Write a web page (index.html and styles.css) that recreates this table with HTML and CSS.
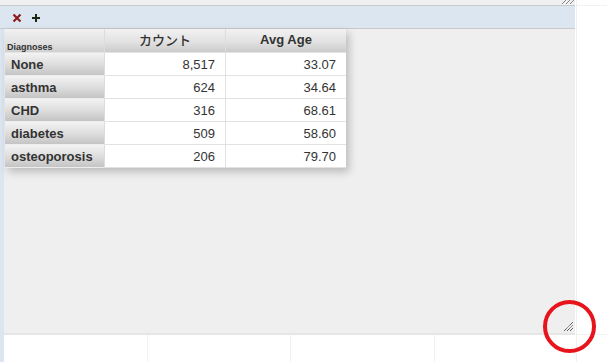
FILE: index.html
```html
<!DOCTYPE html>
<html>
<head>
<meta charset="utf-8">
<link rel="stylesheet" href="styles.css">
</head>
<body>
<div class="page">
  <div class="win">
    <div class="topstrip">
      <svg class="topgrip" width="12" height="4" viewBox="0 0 12 4">
        <path d="M0.5 3.5 L3.5 0.5 M4.5 3.5 L7.5 0.5 M8.5 3.5 L11.5 0.5" stroke="#222" stroke-width="1" stroke-dasharray="1 0.6" fill="none"/>
      </svg>
    </div>
    <div class="toolbar">
      <svg class="ico" width="10" height="10" viewBox="0 0 10 10">
        <path d="M1.5 1.5 L8.5 8.5 M8.5 1.5 L1.5 8.5" stroke="#8b1d1d" stroke-width="2.2" fill="none"/>
      </svg>
      <svg class="ico" width="10" height="10" viewBox="0 0 10 10">
        <path d="M5 1 V9 M1 5 H9" stroke="#1d2814" stroke-width="2" fill="none"/>
      </svg>
    </div>
    <div class="content">
      <table class="pivot">
        <thead>
          <tr>
            <th class="corner">Diagnoses</th>
            <th class="colhead jp">カウント</th>
            <th class="colhead">Avg Age</th>
          </tr>
        </thead>
        <tbody>
          <tr><th class="rowhead">None</th><td>8,517</td><td>33.07</td></tr>
          <tr><th class="rowhead">asthma</th><td>624</td><td>34.64</td></tr>
          <tr><th class="rowhead">CHD</th><td>316</td><td>68.61</td></tr>
          <tr><th class="rowhead">diabetes</th><td>509</td><td>58.60</td></tr>
          <tr><th class="rowhead">osteoporosis</th><td>206</td><td>79.70</td></tr>
        </tbody>
      </table>
      <svg class="grip" width="11" height="11" viewBox="0 0 11 11">
        <path d="M1 10 L10 1 M4 10 L10 4 M7 10 L10 7" stroke="#222" stroke-width="1" stroke-dasharray="1 0.7" fill="none"/>
      </svg>
    </div>
    <div class="bottom">
      <div class="cell c1"></div>
      <div class="cell c2"></div>
      <div class="cell c3"></div>
      <div class="cell c4"></div>
    </div>
  </div>
  <div class="right">
    <div class="rtop"></div>
    <div class="rmid"></div>
  </div>
  <div class="marker"></div>
</div>
</body>
</html>
```

FILE: styles.css
```css
html, body {
  margin: 0;
  padding: 0;
  background: #ffffff;
}
body {
  font-family: "Liberation Sans", Arial, sans-serif;
  color: #333;
}
.page {
  position: relative;
  display: flex;
  width: 607px;
  height: 362px;
  overflow: hidden;
}
.win {
  width: 575px;
  height: 362px;
  background: #dce6f0;
  display: flex;
  flex-direction: column;
  flex: none;
}
.topstrip {
  height: 5px;
  background: #f0f0f0;
  border-bottom: 1px solid #c9c9c9;
  position: relative;
}
.topgrip {
  position: absolute;
  right: 1px;
  top: 0;
}
.toolbar {
  border-bottom: 1px solid #c9c9c9;
  display: flex;
  align-items: center;
  gap: 9px;
  padding-left: 12px;
  padding-top: 1px;
  box-sizing: border-box;
  height: 23px;
}
.ico {
  display: block;
}
.content {
  position: relative;
  margin-left: 4px;
  height: 304px;
  background: #efefef;
  border-bottom: 2px solid #e6e6e6;
  padding-left: 1px;
}
.grip {
  position: absolute;
  right: 1px;
  bottom: 1px;
}
.pivot {
  border-collapse: separate;
  border-spacing: 0;
  box-shadow: 3px 4px 8px rgba(0, 0, 0, 0.22);
  font-size: 13px;
}
.pivot th, .pivot td {
  padding: 0;
  box-sizing: border-box;
}
.corner {
  width: 100px;
  height: 24px;
  font-size: 9px;
  font-weight: bold;
  text-align: left;
  vertical-align: bottom;
  padding: 0 0 0 2px !important;
  color: #333;
  background: linear-gradient(#f1f1f1, #e2e2e2 60%, #d0d0d0);
  border-right: 1px solid #dcdcdc;
  border-bottom: 1px solid #e4e4e4;
}
.colhead {
  height: 24px;
  font-weight: bold;
  font-size: 13px;
  text-align: center;
  color: #333;
  background: linear-gradient(#f2f2f2, #e2e2e2 55%, #cbcbcb);
  border-right: 1px solid #dcdcdc;
  border-bottom: 1px solid #e4e4e4;
  padding-bottom: 2px !important;
}
.colhead:nth-child(2) {
  width: 121px;
}
.colhead:nth-child(3) {
  width: 120px;
  border-right: none;
}
.jp {
  font-family: "Noto Sans CJK JP", "Liberation Sans", sans-serif;
  font-weight: 500;
  font-size: 13px;
}
.rowhead {
  height: 23px;
  text-align: left;
  font-weight: bold;
  font-size: 13px;
  padding-left: 6px !important;
  color: #333;
  background: linear-gradient(#f3f3f3, #dcdcdc 55%, #c4c4c4);
  border-right: 1px solid #dcdcdc;
  border-bottom: 1px solid #ededed;
}
.pivot td {
  height: 23px;
  background: #ffffff;
  text-align: right;
  padding-right: 10px;
  border-right: 1px solid #e2e2e2;
  border-bottom: 1px solid #e2e2e2;
}
.pivot td:last-child {
  border-right: none;
}
.bottom {
  flex: 1;
  margin-left: 4px;
  background: #ffffff;
  display: flex;
}
.cell {
  border-right: 1px solid #f2f2f2;
  flex: none;
}
.c1 { width: 143px; }
.c2 { width: 142px; }
.c3 { width: 143px; }
.c4 { width: 142px; border-right: none; }
.right {
  flex: 1;
  border-left: 1px solid #f0f0f0;
  margin-left: 1px;
  display: flex;
  flex-direction: column;
}
.rtop {
  height: 5px;
  border-bottom: 1px solid #f2f2f2;
}
.rmid {
  height: 328px;
  border-bottom: 1px solid #f2f2f2;
}
.marker {
  position: absolute;
  left: 543px;
  top: 300px;
  width: 45px;
  height: 45px;
  border: 4.5px solid #e8141c;
  border-radius: 50%;
}
```
